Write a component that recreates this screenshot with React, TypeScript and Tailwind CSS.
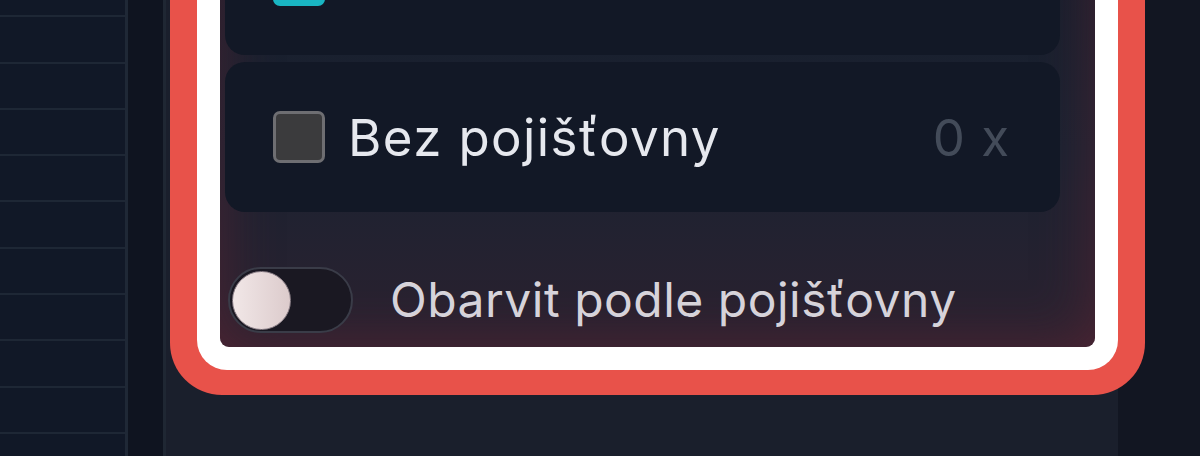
const rows = Array.from({ length: 11 });

function InsuranceCard({ label, count, checked }: { label?: string; count?: string; checked?: boolean }) {
  return (
    <div className="h-[150px] shrink-0 rounded-[20px] bg-[#121826] flex items-center pl-[48px] pr-[50px]">
      <span
        className={
          checked
            ? "w-[52px] h-[52px] rounded-[7px] bg-[#19b5c2] border-2 border-[#19b5c2]"
            : "w-[52px] h-[52px] rounded-[7px] bg-[#3b3b3d] border-[3px] border-[#6e6e72]"
        }
      />
      {label && (
        <span className="ml-[23px] text-[51px] leading-none text-[#e6e8ee] tracking-[1.4px]">{label}</span>
      )}
      {count && <span className="ml-auto text-[51px] leading-none text-[#434b59] tracking-[1px]">{count}</span>}
    </div>
  );
}

export default function App() {
  return (
    <div
      className="relative w-[1200px] h-[456px] overflow-hidden flex bg-[#121622]"
      style={{ fontFamily: "Inter, 'Noto Sans', sans-serif" }}
    >
      {/* left table column */}
      <div className="w-[128px] h-full bg-[#111827] border-r-[3px] border-[#1f2836] overflow-hidden">
        <div className="flex flex-col -mt-[29px]">
          {rows.map((_, i) => (
            <div key={i} className="h-[46.3px] shrink-0 border-b-2 border-[#1e2735]" />
          ))}
        </div>
      </div>
      <div className="w-[38px] h-full bg-[#0f1420] border-r-[3px] border-[#1f2733]" />
      {/* panel */}
      <div className="w-[952px] h-full bg-[#1a1f2c]" />
      <div className="flex-1 h-full bg-[#121622]" />

      {/* highlight annotation */}
      <div className="absolute left-[170px] bottom-[61px] w-[975px] bg-[#e8524a] rounded-b-[52px] px-[27px] pb-[25px]">
        <div className="bg-white rounded-b-[30px] px-[23px] pb-[23px]">
          <div className="rounded-b-[9px] bg-[linear-gradient(180deg,#171d2b_0%,#1b2231_55%,#2c2230_100%)] shadow-[inset_0_0_55px_rgba(105,38,52,0.55)] flex flex-col pl-[5px] pr-[35px] pb-[14px]">
            <div className="flex flex-col gap-[7px]">
              <InsuranceCard checked />
              <InsuranceCard label="Bez pojišťovny" count="0 x" />
            </div>
            <div className="mt-[55px] ml-[3px] flex items-center">
              <div className="w-[125px] h-[66px] rounded-full border-2 border-[#3a3c48] bg-[#1a1822] flex items-center pl-[2px]">
                <span className="w-[59px] h-[59px] rounded-full border border-[#8d8189] bg-[linear-gradient(90deg,#f1e7e7,#dccbcc)]" />
              </div>
              <span className="ml-[37px] text-[48px] leading-none text-[#d6d3da] tracking-[0.5px]">
                Obarvit podle pojišťovny
              </span>
            </div>
          </div>
        </div>
      </div>
    </div>
  );
}
